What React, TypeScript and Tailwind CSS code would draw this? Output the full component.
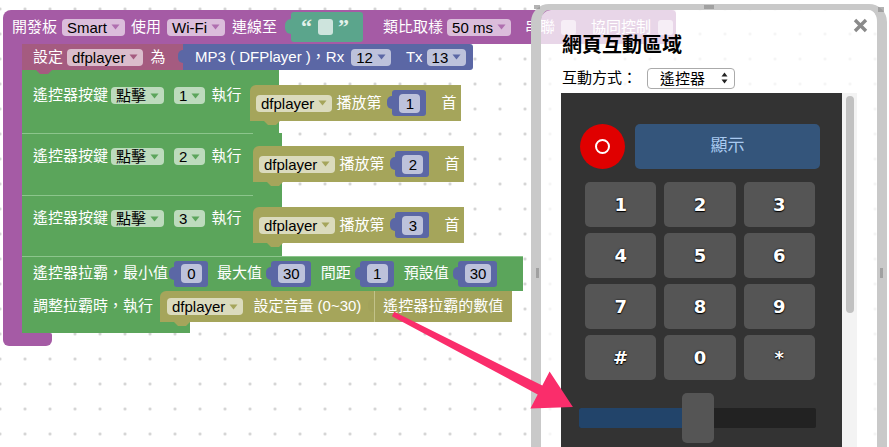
import clsx from "clsx";
import type { ReactNode } from "react";

const FONT = "font-['Liberation_Sans','Noto_Sans_CJK_TC',sans-serif]";

const PURPLE = "bg-[#a55ba5]";
const GREEN = "bg-[#5ba55b]";
const OLIVE = "bg-[#a5a55b]";
const BLUE = "bg-[#5b67a5]";

function Caret({ cls }: { cls: string }) {
  return (
    <svg width="9" height="6" viewBox="0 0 9 6" className={cls}>
      <path d="M0.5 0.5h8L4.5 5.5z" fill="currentColor" />
    </svg>
  );
}

// dropdown field (Blockly style: white 60% over the block colour)
function Dd({ label, caret, className }: { label: string; caret: string; className?: string }) {
  return (
    <span
      className={clsx(
        "inline-flex h-[17px] shrink-0 items-center gap-[4px] rounded-[4px] bg-white/60 pl-[5px] pr-[5px] leading-none text-black",
        className,
      )}
    >
      {label}
      <Caret cls={caret} />
    </span>
  );
}

function Num({ v, className }: { v: string; className?: string }) {
  return (
    <span className={clsx("relative inline-flex h-[26px] shrink-0 items-center rounded-[3px] pl-[7px] pr-[6px]", BLUE, className)}>
      <span className={clsx("absolute -left-[5px] top-[6px] h-[13px] w-[6px] rounded-l-[5px]", BLUE)} />
      <span className="flex h-[19px] min-w-[21px] items-center justify-center rounded-[4px] bg-white/60 px-[5px] leading-none text-black">
        {v}
      </span>
    </span>
  );
}

// next-connection bump under a statement block
function Tab({ color }: { color: string }) {
  return (
    <span
      className={clsx(
        "absolute -bottom-[4px] left-[14px] z-10 h-[4px] w-[16px] [clip-path:polygon(0_0,100%_0,75%_100%,25%_100%)]",
        color,
      )}
    />
  );
}

function Play({ n }: { n: string }) {
  return (
    <div className={clsx("relative flex h-[36px] w-fit items-center rounded-tl-[6px] pl-[6px] pr-[5px]", OLIVE)}>
      <Dd label="dfplayer" caret="text-[#a5a55b]" />
      <span className="ml-[4px]">播放第</span>
      <Num v={n} className="ml-[11px]" />
      <span className="ml-[15px]">首</span>
      <Tab color={OLIVE} />
    </div>
  );
}

function KeyBlock({
  n,
  h,
  labelW,
  pt,
  olivePt,
  first,
}: {
  n: string;
  h: string;
  labelW: string;
  pt: string;
  olivePt: string;
  first?: boolean;
}) {
  return (
    <div className={clsx("flex", h)}>
      <div className={clsx("h-full pl-[11px]", GREEN, labelW, pt, !first && "shadow-[inset_0_1px_0_#8cc58c]")}>
        <div className="flex h-[17px] items-center">
          <span>遙控器按鍵</span>
          <Dd label="點擊" caret="text-[#5ba55b]" className="ml-[3px]" />
          <Dd label={n} caret="text-[#5ba55b]" className="ml-[10px]" />
          <span className="ml-[6px]">執行</span>
        </div>
      </div>
      <div className={clsx("flex flex-col bg-[linear-gradient(90deg,#5ba55b_29px,transparent_29px)]", olivePt)}>
        <Play n={n} />
      </div>
    </div>
  );
}

function SliderBlock() {
  return (
    <div className="flex flex-col">
      <div className={clsx("flex h-[35px] w-[501px] items-center pl-[11px] shadow-[inset_0_1px_0_#8cc58c]", GREEN)}>
        <span>遙控器拉霸，最小值</span>
        <Num v="0" className="ml-[6px]" />
        <span className="ml-[9px]">最大值</span>
        <Num v="30" className="ml-[9px]" />
        <span className="ml-[10px]">間距</span>
        <Num v="1" className="ml-[9px]" />
        <span className="ml-[10px]">預設值</span>
        <Num v="30" className="ml-[9px]" />
      </div>
      <div className="flex">
        <div className={clsx("flex h-[31px] w-[138px] items-center pl-[11px]", GREEN)}>調整拉霸時，執行</div>
        <div className="flex flex-col bg-[linear-gradient(90deg,#5ba55b_30px,transparent_30px)]">
          <div className={clsx("relative flex h-[31px] w-[352px] items-center rounded-tl-[6px] pl-[7px]", OLIVE)}>
            <Dd label="dfplayer" caret="text-[#a5a55b]" />
            <span className="ml-[10px]">設定音量 (0~30)</span>
            <div className="relative ml-[13px] flex h-full flex-1 items-center bg-[#a2a25a] pl-[9px] shadow-[inset_1px_0_0_#c2c28a]">
              <span className="absolute -left-[6px] top-[8px] h-[13px] w-[6px] rounded-l-[5px] bg-[#a2a25a]" />
              遙控器拉霸的數值
            </div>
            <Tab color={OLIVE} />
          </div>
        </div>
      </div>
      <div className={clsx("h-[11px] w-[168px]", GREEN)} />
    </div>
  );
}

function Blocks() {
  return (
    <div className={clsx("flex flex-col text-[15px] text-white", FONT)}>
      {/* hat row */}
      <div className={clsx("flex h-[34px] w-[673px] items-center rounded-tl-[8px] rounded-tr-[4px] pl-[9px]", PURPLE)}>
        <span>開發板</span>
        <Dd label="Smart" caret="text-[#a55ba5]/80" className="ml-[5px]" />
        <span className="ml-[6px]">使用</span>
        <Dd label="Wi-Fi" caret="text-[#a55ba5]/80" className="ml-[6px]" />
        <span className="ml-[7px]">連線至</span>
        <div className="relative ml-[14px] flex h-[30px] w-[72px] items-center rounded-[3px] bg-[#5ba58c] pl-[10px]">
          <span className="absolute -left-[6px] top-[7px] h-[15px] w-[7px] rounded-l-[6px] bg-[#5ba58c]" />
          <span className="font-['Liberation_Serif',serif] text-[22px] font-bold leading-none text-[#e2f1eb]">“</span>
          <span className="ml-[6px] h-[16px] w-[15px] rounded-[3px] bg-white/70" />
          <span className="ml-[5px] font-['Liberation_Serif',serif] text-[22px] font-bold leading-none text-[#e2f1eb]">”</span>
        </div>
        <span className="ml-[20px]">類比取樣</span>
        <Dd label="50 ms" caret="text-[#a55ba5]/80" className="ml-[4px]" />
        <span className="ml-[14px]">串聯</span>
        <span className="ml-[6px] h-[15px] w-[15px] rounded-[3px] bg-white/60" />
        <span className="ml-[15px]">協同控制</span>
        <span className="ml-[7px] h-[15px] w-[15px] rounded-[3px] bg-white/60" />
      </div>

      <div className="flex">
        <div className={clsx("w-[19px]", PURPLE)} />
        <div className="flex flex-col">
          {/* set dfplayer */}
          <div className="relative flex h-[26px]">
            <div className="flex w-[161px] items-center bg-[#a55b80] pl-[11px]">
              <span>設定</span>
              <Dd label="dfplayer" caret="text-[#a55b80]" className="ml-[4px]" />
              <span className="ml-[7px]">為</span>
            </div>
            <div className={clsx("relative flex w-[290px] items-center rounded-r-[3px] pl-[12px]", BLUE)}>
              <span className="absolute -left-[5px] top-[6px] h-[13px] w-[6px] rounded-l-[5px] bg-[#5b67a5]" />
              <span>MP3 ( DFPlayer )，Rx</span>
              <Dd label="12" caret="text-[#5b67a5]" className="ml-[7px]" />
              <span className="ml-[15px]">Tx</span>
              <Dd label="13" caret="text-[#5b67a5]" className="ml-[4px]" />
            </div>
            <Tab color="bg-[#a55b80]" />
          </div>
          <KeyBlock n="1" h="h-[63px]" labelW="w-[228px]" pt="pt-[17px]" olivePt="pt-[15px]" first />
          <KeyBlock n="2" h="h-[62px]" labelW="w-[231px]" pt="pt-[15px]" olivePt="pt-[13px]" />
          <KeyBlock n="3" h="h-[61px]" labelW="w-[231px]" pt="pt-[15px]" olivePt="pt-[12px]" />
          <SliderBlock />
        </div>
      </div>
      <div className={clsx("h-[13px] w-[49px] rounded-b-[6px] rounded-tr-[2px]", PURPLE)} />
    </div>
  );
}

function Grip({ className }: { className: string }) {
  return (
    <span
      className={clsx(
        "absolute bg-[radial-gradient(circle,#8a8a8a_0.6px,transparent_0.9px)] bg-[length:2px_2px]",
        className,
      )}
    />
  );
}

const KEYS = ["1", "2", "3", "4", "5", "6", "7", "8", "9", "#", "0", "*"];

function Remote() {
  return (
    <div className="h-[360px] w-[281px] bg-[#333333] pl-[19px] pr-[22px] pt-[31px]">
      <div className="flex gap-[10px]">
        <div className="flex h-[45px] w-[45px] items-center justify-center rounded-full bg-[#e00000]">
          <div className="h-[15px] w-[15px] rounded-full border-2 border-white" />
        </div>
        <div className="flex h-[45px] flex-1 items-center justify-center rounded-[5px] bg-[#34557b] text-[17px] text-[#a9caf0]">
          顯示
        </div>
      </div>
      <div className="mx-[5px] mt-[13px] grid grid-cols-3 gap-x-[8px] gap-y-[6px]">
        {KEYS.map((k) => (
          <div
            key={k}
            className="flex h-[45px] items-center justify-center rounded-[5px] bg-[#555555] font-['DejaVu_Sans',sans-serif] text-[18px] font-bold text-white [text-shadow:0_0_2px_#000,0_1px_1px_#000]"
          >
            {k}
          </div>
        ))}
      </div>
      {/* slider */}
      <div className="relative mt-[13px] -ml-[1px] h-[50px] w-[237px] pt-[15px]">
        <div className="flex h-[20px] overflow-hidden rounded-[2px] bg-[#222222]">
          <div className="w-[112px] bg-[#22446a]" />
        </div>
        <div className="absolute left-[103px] top-0 h-[50px] w-[32px] rounded-[5px] bg-[#555555]" />
      </div>
    </div>
  );
}

function Panel() {
  return (
    <div className="absolute left-[531px] top-[4px] h-[460px] w-[356px] rounded-t-[18px] border-x-[10px] border-t-[6px] border-[#c9c9c9]">
      <Grip className="-left-[7px] -top-[5px] h-[4px] w-[6px]" />
      <Grip className="left-[163px] -top-[5px] h-[4px] w-[10px]" />
      <Grip className="-right-[7px] -top-[3px] h-[5px] w-[6px]" />
      <Grip className="-left-[5px] top-[258px] h-[10px] w-[3px]" />
      <Grip className="-right-[6px] top-[258px] h-[10px] w-[3px]" />
      <div className={clsx("relative h-full rounded-t-[10px] bg-white/75 pl-[20px] pt-[21px] text-black", FONT)}>
        <svg className="absolute right-[9px] top-[8px]" width="15" height="15" viewBox="0 0 15 15">
          <path d="M2 2L13 13M13 2L2 13" stroke="#8a8a8a" strokeWidth="3.4" strokeLinecap="butt" />
        </svg>
        <h2 className="ml-[1px] text-[20px] font-bold leading-[28px]">網頁互動區域</h2>
        <div className="ml-[1px] mt-[8px] flex items-center">
          <span className="text-[15px]">互動方式：</span>
          <div className="ml-[10px] flex h-[21px] w-[88px] items-center justify-between rounded-[4px] border border-[#aaaaaa] bg-white pl-[12px] pr-[6px] text-[15px] leading-none">
            遙控器
            <svg width="7" height="12" viewBox="0 0 7 12">
              <path d="M3.5 0.5L6.5 4.5H0.5z M3.5 11.5L6.5 7.5H0.5z" fill="#222" />
            </svg>
          </div>
        </div>
        <div className="mt-[3px] flex">
          <Remote />
          <div className="h-[360px] w-[15px] bg-[#f3f3f3] px-[4px] pt-[3px]">
            <div className="h-[217px] w-[8px] rounded-full bg-[#c1c1c1]" />
          </div>
        </div>
      </div>
    </div>
  );
}

function PinkArrow() {
  return (
    <svg className="pointer-events-none absolute left-0 top-0" width="889" height="447" viewBox="0 0 889 447">
      <polygon
        points="394.2,311.8 542.3,385.6 549.6,371.4 572.9,407 530.4,408.6 537.7,394.4 391.9,316.2"
        fill="#fa2d6b"
      />
    </svg>
  );
}

export default function App(): ReactNode {
  return (
    <div className="relative h-[447px] w-[889px] overflow-hidden bg-white bg-[radial-gradient(circle,#cccccc_1px,transparent_1.6px)] bg-[length:25px_25px] bg-[position:12.5px_-3.5px] pl-[3px] pt-[10px]">
      <Blocks />
      <Panel />
      <PinkArrow />
    </div>
  );
}
